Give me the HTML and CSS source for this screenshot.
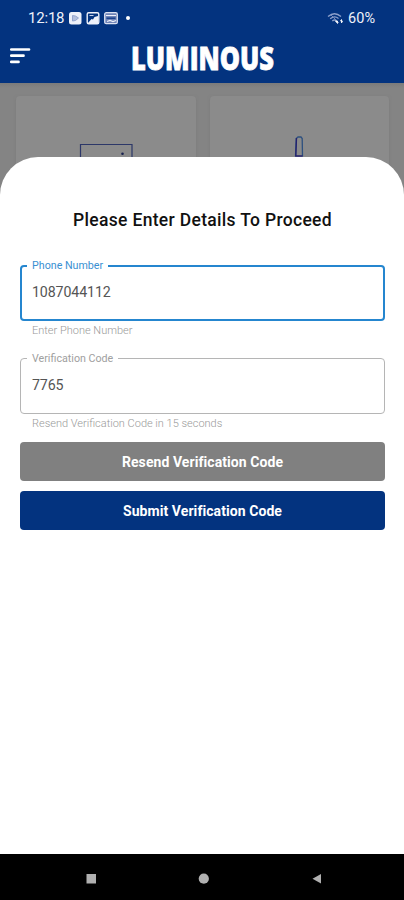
FILE: index.html
```html
<!DOCTYPE html>
<html lang="en">
<head>
<meta charset="utf-8">
<title>Luminous</title>
<link rel="stylesheet" href="styles.css">
</head>
<body>
<div class="phone">
  <header class="header">
    <div class="status">
      <span class="time">12:18</span>
      <svg class="notifs" width="64" height="14" viewBox="0 0 64 14">
        <rect x="0" y="1" width="12.5" height="12.5" rx="2.5" fill="#eef1fa"/>
        <path d="M3.500 4.500l3 .5 3 2-3 2.500-3 .5z" fill="#b5c1de" stroke="#8799c6" stroke-width=".8"/>
        <rect x="18.200" y="1.700" width="11.600" height="11" rx="1.500" fill="#03337f" stroke="#eef1fa" stroke-width="1.400"/>
        <path d="M19 12l3.500-4 1.500.5 1.500-2.500 3.500-1v7z" fill="#eef1fa"/>
        <path d="M20.500 4.500h4" stroke="#c6d0e8"/>
        <rect x="35.700" y="1.700" width="12.600" height="11" rx="1.500" fill="#6e83b7" stroke="#dbe1f1" stroke-width="1.300"/>
        <path d="M37 4.500h10M38 10.500l3-1 3 1 3-1" fill="none" stroke="#eef1fa" stroke-width="1.200"/>
        <path d="M37.500 7.200h9" stroke="#17408c" stroke-width="1.500"/>
        <circle cx="59" cy="7" r="2" fill="#fff"/>
      </svg>
      <svg class="wifi" width="17" height="13" viewBox="0 0 17 13" fill="none">
        <path d="M1 4.500Q7.500-1 14 4.500M3.200 6.800Q7.500 3.200 11.500 6.500M5.300 9Q7.500 7 9.500 8.800" stroke="#8da0ca" stroke-width="1.300"/>
        <path d="M3 2l9 9" stroke="#7188bd"/>
        <path d="M8.500 9l2 2.500V9zM14.500 11V7.500l-1 1.500h2z" fill="#fff" stroke="#fff" stroke-width=".8"/>
      </svg>
      <span class="battery">60%</span>
    </div>
    <div class="appbar">
      <svg class="menu" width="22" height="18" viewBox="0 0 22 18" stroke="#fff" stroke-width="2.700" stroke-linecap="round">
        <path d="M2.300 2.500h17.700M2.300 8.700h12.200M2.300 14.900h7.200"/>
      </svg>
      <svg class="logo" width="150" height="47" viewBox="0 0 150 47">
        <text x="3" y="34.200" textLength="143" lengthAdjust="spacingAndGlyphs">LUMINOUS</text>
      </svg>
    </div>
  </header>
  <main class="backdrop">
    <div class="tile">
      <svg width="54" height="34" viewBox="0 0 54 34" fill="none" stroke="#2c3768" stroke-width="1.200">
        <path d="M1.500 34V1.500H53V34"/><circle cx="43.500" cy="10.800" r="1.300" fill="#17204f" stroke="none"/>
      </svg>
    </div>
    <div class="tile tile-pen">
      <svg width="10" height="34" viewBox="0 0 10 34" fill="none" stroke-width="1.300">
        <path d="M1.500 20.500L2.200 2.500L4 1h3l1.200 1.500.3 18" stroke="#2d507f"/><path d="M1.800 20.500L2.500 2M1.500 20h7" stroke="#24206e"/>
      </svg>
    </div>
  </main>
  <section class="sheet">
    <h1>Please Enter Details To Proceed</h1>
    <fieldset class="field focused">
      <legend>Phone Number</legend>
      <div class="value">1087044112</div>
    </fieldset>
    <p class="hint hint-phone">Enter Phone Number</p>
    <fieldset class="field code">
      <legend>Verification Code</legend>
      <div class="value">7765</div>
    </fieldset>
    <p class="hint hint-code">Resend Verification Code in 15 seconds</p>
    <button class="btn resend"><span>Resend Verification Code</span></button>
    <button class="btn submit"><span>Submit Verification Code</span></button>
  </section>
  <nav class="nav">
    <svg width="404" height="46" viewBox="0 0 404 46" fill="#b0b0b0">
      <path d="M86.500 20h9.500v9.500h-9.500z"/><circle cx="203.800" cy="24.700" r="5.100"/><path d="M312.500 24.700l8.500-4.700v9.500z"/>
    </svg>
  </nav>
</div>
</body>
</html>
```
FILE: styles.css
```css
* { box-sizing: border-box; }
body { margin: 0; font-family: Roboto, "Liberation Sans", sans-serif; background: #fff; }
.phone { width: 404px; height: 900px; display: flex; flex-direction: column; overflow: hidden; background: #848484; }
.header { height: 83px; flex: none; background: #03337f; color: #fff; }
.status { height: 36px; display: flex; align-items: center; padding: 0 28px; color: #eef1fa; }
.time { width: 41px; font-size: 15px; line-height: 36px; letter-spacing: -.2px; }
.wifi { margin: 0 4px 0 auto; }
.battery { font-size: 14.5px; letter-spacing: .1px; width: 28px; white-space: nowrap; }
.appbar { height: 47px; display: flex; align-items: flex-start; padding: 0 0 0 9px; }
.menu { margin-top: 11px; }
.logo { margin: 0 0 0 97px; overflow: visible; }
.logo text { font: 800 32px "Open Sans", sans-serif; fill: #fff; stroke: #fff; stroke-width: .8px; }
.backdrop { height: 74px; flex: none; display: grid; grid-template-columns: 1fr 1fr; gap: 14px; padding: 13px 15px 0 16px; background: linear-gradient(#7b7b7b, #848484 5px); }
.tile { height: 110px; border-radius: 4px; background: #8b8b8b; box-shadow: 0 1px 3px #7b7b7b; padding: 47px 0 0 63px; }
.tile-pen { padding: 40px 0 0 84px; }
.sheet { position: relative; height: 697px; flex: none; background: #fff; border-radius: 38px 38px 0 0; padding: 51px 19px 0 20px; }
h1 { margin: 0; font-size: 17.5px; line-height: 24px; font-weight: 500; letter-spacing: .32px; text-align: center; color: #111; white-space: nowrap; }
.field { height: 62px; margin: 27px 0 0; min-width: 0; border: 1px solid #b5b5b5; border-radius: 4px; padding: 0 0 0 11px; }
.field.focused { border: 2px solid #2586cf; padding-left: 10px; }
legend { margin-left: -5px; padding: 0 5px 0 5px; font-size: 10.7px; line-height: 13px; color: #a0a0a0; white-space: nowrap; }
.focused legend { color: #3990d2; }
.value { font-size: 14.2px; line-height: 20px; padding-top: 10px; color: #555; letter-spacing: -.1px; }
.hint { margin: 3px 0 0 12px; font-size: 11px; line-height: 14px; color: #999; font-weight: 300; white-space: nowrap; }
.field.code { margin-top: 14px; }
.btn { display: block; width: 100%; height: 39px; border: 0; border-radius: 4px; padding: 2px 0 0; color: #fff; font: 700 14px/37px Roboto, sans-serif; letter-spacing: .07px; }
.resend { margin-top: 11px; background: #808080; }
.submit { margin-top: 10px; background: #03337f; }
.nav { height: 46px; flex: none; background: #000; }
.nav svg { display: block; }
```
